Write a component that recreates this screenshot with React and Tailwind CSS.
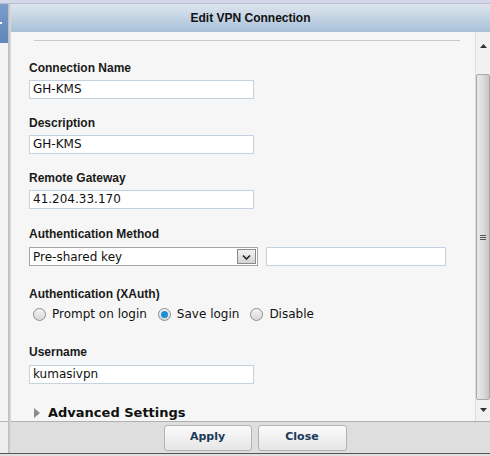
const label = "block text-[12px] leading-[14px] font-bold text-[#1a1a1a]";
const sans = { fontFamily: '"Liberation Sans", Arial, sans-serif' };
const verd = { fontFamily: '"DejaVu Sans", Verdana, sans-serif' };
const inputCls =
  "block h-[19px] bg-white border border-[#c6d3de] px-[3px] text-[12px] leading-[17px] text-[#111]";

function Radio({ checked, text }) {
  return (
    <div className="flex items-center gap-[6px]">
      <span className="w-[13px] h-[13px] rounded-full border border-[#8d8d8d] bg-gradient-to-b from-[#f4f4f4] to-[#d8d8d8] flex items-center justify-center">
        {checked && <span className="w-[7px] h-[7px] rounded-full bg-[#1d8fd6]" />}
      </span>
      <span className="text-[12px] text-[#111]" style={verd}>{text}</span>
    </div>
  );
}

export default function App() {
  return (
    <div className="w-[490px] h-[456px] overflow-hidden flex flex-col bg-[#e6e6e6]" style={sans}>
      <div className="h-[4px] bg-[#d4d6ea] border-b border-[#b9bdd2]" />
      <div className="flex flex-1 min-h-0">
        <div className="w-[8px] flex flex-col">
          <div className="h-[39px] bg-gradient-to-b from-[#7a9dcb] to-[#5f87bb] relative">
            <span className="absolute left-0 top-[18px] w-[2px] h-[2px] bg-white" />
          </div>
          <div className="flex-1 bg-[#f4f4f4] flex flex-col">
            <div className="h-[378px]" />
            <div className="flex-1 border-t border-[#b5b5b5] bg-[#eeeeee]" />
          </div>
        </div>
        <div className="w-[3px] bg-gradient-to-r from-[#b9b9b9] to-[#dedede]" />
        <div className="flex-1 flex flex-col min-w-0">
          <div className="h-[28px] bg-gradient-to-b from-[#dde5ee] to-[#a9c1d8] flex items-center justify-center text-[12px] font-bold text-[#111]">
            Edit VPN Connection
          </div>
          <div className="flex flex-1 min-h-0 bg-[#f6f6f6]">
            <div className="flex-1 pl-[18px] pt-[8px]">
              <div className="ml-[5px] mr-[15px] h-[1px] bg-[#c8c8c8]" />
              <div className="mt-[20px]">
                <span className={label}>Connection Name</span>
                <div className={inputCls + " w-[225px] mt-[5px]"} style={verd}>GH-KMS</div>
              </div>
              <div className="mt-[17px]">
                <span className={label}>Description</span>
                <div className={inputCls + " w-[225px] mt-[5px]"} style={verd}>GH-KMS</div>
              </div>
              <div className="mt-[17px]">
                <span className={label}>Remote Gateway</span>
                <div className={inputCls + " w-[225px] mt-[5px]"} style={verd}>41.204.33.170</div>
              </div>
              <div className="mt-[18px]">
                <span className={label}>Authentication Method</span>
                <div className="flex mt-[6px] gap-[8px]">
                  <div className="w-[229px] h-[19px] bg-white border border-[#a5a5a5] flex items-center justify-between pl-[3px] pr-[1px]">
                    <span className="text-[12px] text-[#111]" style={verd}>Pre-shared key</span>
                    <span className="w-[19px] h-[15px] border border-[#8a8a8a] bg-gradient-to-b from-[#f2f2f2] to-[#d4d4d4] flex items-center justify-center">
                      <svg width="9" height="6" viewBox="0 0 9 6">
                        <path d="M1 1.5 L4.5 5 L8 1.5" stroke="#222" strokeWidth="1.6" fill="none" />
                      </svg>
                    </span>
                  </div>
                  <div className="w-[180px] h-[19px] bg-white border border-[#c6d3de]" />
                </div>
              </div>
              <div className="mt-[21px]">
                <span className={label}>Authentication (XAuth)</span>
                <div className="flex mt-[4px] gap-[11px] pl-[4px] h-[18px]">
                  <Radio text="Prompt on login" />
                  <Radio checked text="Save login" />
                  <Radio text="Disable" />
                </div>
              </div>
              <div className="mt-[22px]">
                <span className={label}>Username</span>
                <div className={inputCls + " w-[225px] mt-[6px]"} style={verd}>kumasivpn</div>
              </div>
              <div className="mt-[19px] flex items-center gap-[8px] pl-[5px]">
                <svg width="6" height="10" viewBox="0 0 6 10">
                  <path d="M0 0 L6 5 L0 10 Z" fill="#8a8a8a" />
                </svg>
                <span className="text-[13px] font-bold text-[#111]" style={verd}>Advanced Settings</span>
              </div>
            </div>
            <div className="w-[15px] bg-[#f1f1f1] border-l border-[#dcdcdc] flex flex-col items-center">
              <div className="h-[16px] flex items-end justify-center">
                <svg width="7" height="4" viewBox="0 0 7 4">
                  <path d="M3.5 0 L7 4 L0 4 Z" fill="#333" />
                </svg>
              </div>
              <div className="mt-[26px] w-[14px] h-[326px] rounded-[2px] border border-[#a8a8a8] bg-gradient-to-r from-[#e9e9e9] via-[#dcdcdc] to-[#c6c6c6] flex items-center justify-center">
                <div className="flex flex-col gap-[1px]">
                  <span className="block w-[6px] h-[1px] bg-[#555]" />
                  <span className="block w-[6px] h-[1px] bg-[#555]" />
                  <span className="block w-[6px] h-[1px] bg-[#555]" />
                </div>
              </div>
              <div className="mt-[8px]">
                <svg width="7" height="4" viewBox="0 0 7 4">
                  <path d="M0 0 L7 0 L3.5 4 Z" fill="#333" />
                </svg>
              </div>
            </div>
          </div>
          <div className="h-[32px] bg-[#dedede] border-t border-[#b0b0b0] flex items-center justify-center gap-[6px] pl-[9px]">
            <div className="w-[88px] h-[26px] rounded-[3px] border border-[#b2b2b2] bg-gradient-to-b from-[#fbfbfb] to-[#e6e6e6] flex items-center justify-center text-[11px] font-bold text-[#1b3a5a]" style={verd}>
              Apply
            </div>
            <div className="w-[89px] h-[26px] rounded-[3px] border border-[#b2b2b2] bg-gradient-to-b from-[#fbfbfb] to-[#e6e6e6] flex items-center justify-center text-[11px] font-bold text-[#1b3a5a]" style={verd}>
              Close
            </div>
          </div>
        </div>
      </div>
      <div className="h-[1px] bg-[#555]" />
      <div className="h-[2px] bg-[#e0e0e0]" />
    </div>
  );
}
